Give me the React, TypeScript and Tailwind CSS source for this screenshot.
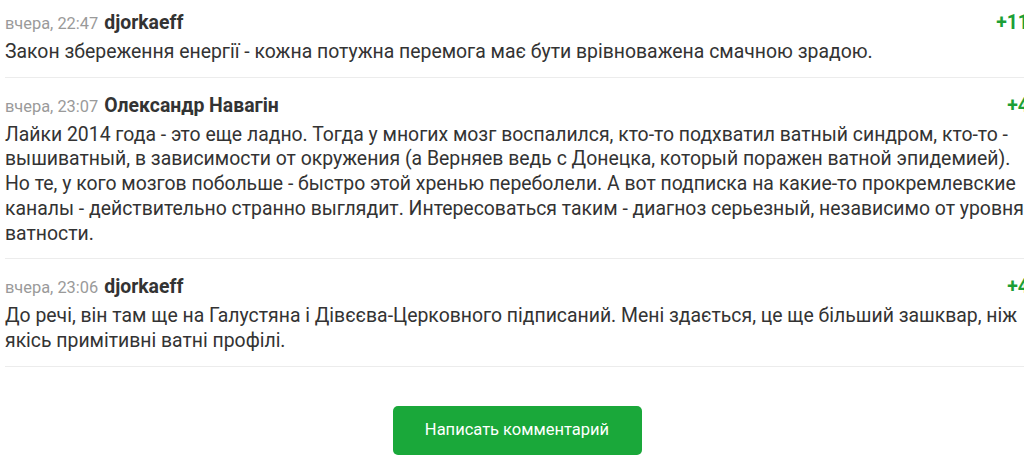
import React from "react";

type C = { time: string; name: string; rating: string; text: string };

const comments: C[] = [
  {
    time: "вчера, 22:47",
    name: "djorkaeff",
    rating: "+11",
    text: "Закон збереження енергії - кожна потужна перемога має бути врівноважена смачною зрадою.",
  },
  {
    time: "вчера, 23:07",
    name: "Олександр Навагін",
    rating: "+4",
    text: "Лайки 2014 года - это еще ладно. Тогда у многих мозг воспалился, кто-то подхватил ватный синдром, кто-то - вышиватный, в зависимости от окружения (а Верняев ведь с Донецка, который поражен ватной эпидемией). Но те, у кого мозгов побольше - быстро этой хренью переболели. А вот подписка на какие-то прокремлевские каналы - действительно странно выглядит. Интересоваться таким - диагноз серьезный, независимо от уровня ватности.",
  },
  {
    time: "вчера, 23:06",
    name: "djorkaeff",
    rating: "+4",
    text: "До речі, він там ще на Галустяна і Дівєєва-Церковного підписаний. Мені здається, це ще більший зашквар, ніж якісь примітивні ватні профілі.",
  },
];

export default function App() {
  return (
    <div
      className="w-[1024px] h-[472px] overflow-hidden bg-white"
      style={{ fontFamily: "Roboto, 'Noto Sans', sans-serif" }}
    >
      <div className="w-[1024px] ml-[5px]">
        {comments.map((c, i) => (
          <div
            key={i}
            className={`border-b border-[#ececec] ${i === 0 ? "pt-[12px]" : "pt-[17px]"} pb-[12px]`}
          >
            <div className="flex items-baseline justify-between h-[22px] leading-[22px]">
              <div className="flex items-baseline">
                <span className="text-[16.4px] text-[#9a9a9a]">{c.time}</span>
                <span className="ml-[6px] text-[19.4px] font-bold text-[#333333]">{c.name}</span>
              </div>
              <span className="text-[19.4px] font-bold text-[#1c9f36]">{c.rating}</span>
            </div>
            <div className="mt-[6px] text-[19.4px] leading-[24.7px] text-[#333333]">{c.text}</div>
          </div>
        ))}
        <div className="flex justify-center pt-[39px]">
          <button className="w-[249px] h-[49px] rounded-[5px] bg-[#1aa83a] text-white text-[16.5px]">
            Написать комментарий
          </button>
        </div>
      </div>
    </div>
  );
}
